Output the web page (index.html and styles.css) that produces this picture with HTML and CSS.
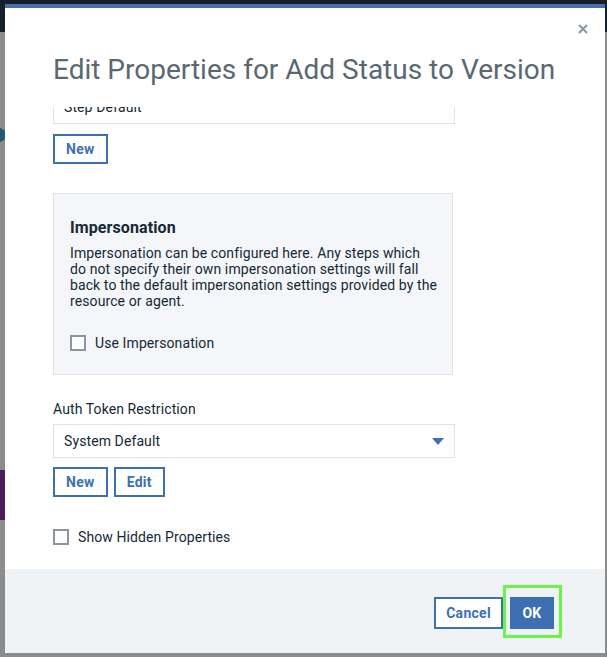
FILE: index.html
```html
<!DOCTYPE html>
<html>
<head>
<meta charset="utf-8">
<link rel="stylesheet" href="styles.css">
</head>
<body>
<div class="page">
  <div class="topbar"></div>
  <div class="page-rest">
    <div class="bg-circle"></div>
    <div class="bg-tag"></div>
  </div>
</div>
<div class="modal">
  <div class="modal-head">
    <h1 class="title">Edit Properties for Add Status to Version</h1>
    <button class="close" aria-label="Close">
      <svg width="10" height="10" viewBox="0 0 10 10"><path d="M1 1L9 9M9 1L1 9" stroke="#8897a2" stroke-width="2"/></svg>
    </button>
  </div>
  <div class="modal-body">
    <div class="scroll">
      <div class="input clipped">Step Default</div>
      <div class="btn-row"><button class="btn">New</button></div>
      <div class="panel">
        <h2 class="panel-title">Impersonation</h2>
        <p class="panel-text">Impersonation can be configured here. Any steps which<br>do not specify their own impersonation settings will fall<br>back to the default impersonation settings provided by the<br>resource or agent.</p>
        <label class="check"><span class="box"></span>Use Impersonation</label>
      </div>
      <div class="field-label">Auth Token Restriction</div>
      <div class="input select">System Default
        <svg class="caret" width="12" height="7" viewBox="0 0 12 7"><path d="M0 0H12L6 7Z" fill="#3d70b2"/></svg>
      </div>
      <div class="btn-row second"><button class="btn">New</button><button class="btn">Edit</button></div>
      <label class="check hidden-props"><span class="box"></span>Show Hidden Properties</label>
    </div>
  </div>
  <div class="modal-foot">
    <button class="btn cancel">Cancel</button>
    <button class="btn primary">OK</button>
  </div>
</div>
</body>
</html>
```

FILE: styles.css
```css
* { box-sizing: border-box; }
html, body { margin: 0; padding: 0; }
body {
  width: 607px;
  height: 657px;
  overflow: hidden;
  font-family: Roboto, "Liberation Sans", sans-serif;
  position: relative;
  background: #8a8a8a;
}
.page { height: 657px; display: flex; flex-direction: column; }
.topbar { height: 32px; background: #16202a; }
.page-rest { flex: 1; background: #8c8c8c; position: relative; }
.bg-circle {
  position: absolute; left: -8px; top: 96px; width: 14px; height: 14px;
  border-radius: 50%; background: #1f5a6e;
}
.bg-tag {
  position: absolute; left: 0; top: 438px; width: 6px; height: 50px; background: #4b1d5a;
}
.modal {
  position: absolute;
  left: 5px; top: 4px;
  width: 600px; height: 649px;
  background: #fff;
  border-top: 4px solid #4a6fae;
  display: flex; flex-direction: column;
}
.modal-head {
  position: relative;
  padding: 44px 48px 0 48px;
  height: 99px;
  flex: none;
}
.title {
  margin: 0;
  font-weight: 400;
  font-size: 28px;
  line-height: 36px;
  color: #5a6872;
  letter-spacing: 0;
  white-space: nowrap;
}
.close {
  position: absolute;
  right: 12px; top: 11px;
  width: 20px; height: 20px;
  padding: 0; border: 0; background: none;
  display: flex; align-items: center; justify-content: center;
}
.modal-body {
  flex: 1;
  overflow: hidden;
  padding: 0 48px;
}
.scroll { width: 402px; display: flex; flex-direction: column; letter-spacing: 0.1px; }
.input {
  height: 34px;
  border: 1px solid #dfe3e6;
  background: #fff;
  padding: 0 10px;
  font-size: 14px;
  color: #152935;
  display: flex; align-items: center;
  flex: none;
}
.clipped { margin-top: -17px; }
.btn-row { display: flex; gap: 6px; margin-top: 10px; }
.btn-row.second { margin-top: 9px; }
.btn {
  height: 30px;
  padding: 0 11px;
  border: 2px solid #3d70b2;
  background: #fff;
  color: #3d70b2;
  font-family: inherit;
  font-weight: 700;
  font-size: 14px;
  letter-spacing: 0.3px;
}
.panel {
  margin-top: 29px;
  width: 400px;
  height: 182px;
  background: #f4f6fa;
  border: 1px solid #dfe3e6;
  padding: 24px 4px 0 16px;
  flex: none;
}
.panel-title {
  margin: 0;
  font-size: 16px;
  font-weight: 700;
  color: #152935;
  line-height: 20px;
}
.panel-text {
  margin: 7px 0 0 0;
  font-size: 14px;
  line-height: 16px;
  color: #152935;
  white-space: nowrap;
}
.check {
  display: flex; align-items: center; gap: 9px;
  font-size: 14px; color: #152935;
  margin-top: 26px;
  line-height: 16px;
}
.box {
  width: 16px; height: 16px;
  border: 2px solid #8897a2;
  background: #fff;
  flex: none;
}
.field-label {
  margin-top: 25px;
  font-size: 14px;
  color: #152935;
  line-height: 18px;
}
.select { margin-top: 6px; justify-content: space-between; width: 402px; }
.hidden-props { margin-top: 32px; }
.modal-foot {
  height: 84px;
  flex: none;
  background: #f0f3f6;
  display: flex; justify-content: flex-end; align-items: center;
  padding: 4px 51px 0 0;
  gap: 7px;
}
.cancel { height: 32px; padding: 0 10px; }
.primary {
  position: relative;
  height: 32px;
  background: #3d70b2;
  color: #fff;
  padding: 0 10px;
  width: 44px;
}
.primary::after {
  content: "";
  position: absolute;
  left: -9px; right: -10px; top: -14px; bottom: -11px;
  border: 3px solid #6df24a;
}
```
